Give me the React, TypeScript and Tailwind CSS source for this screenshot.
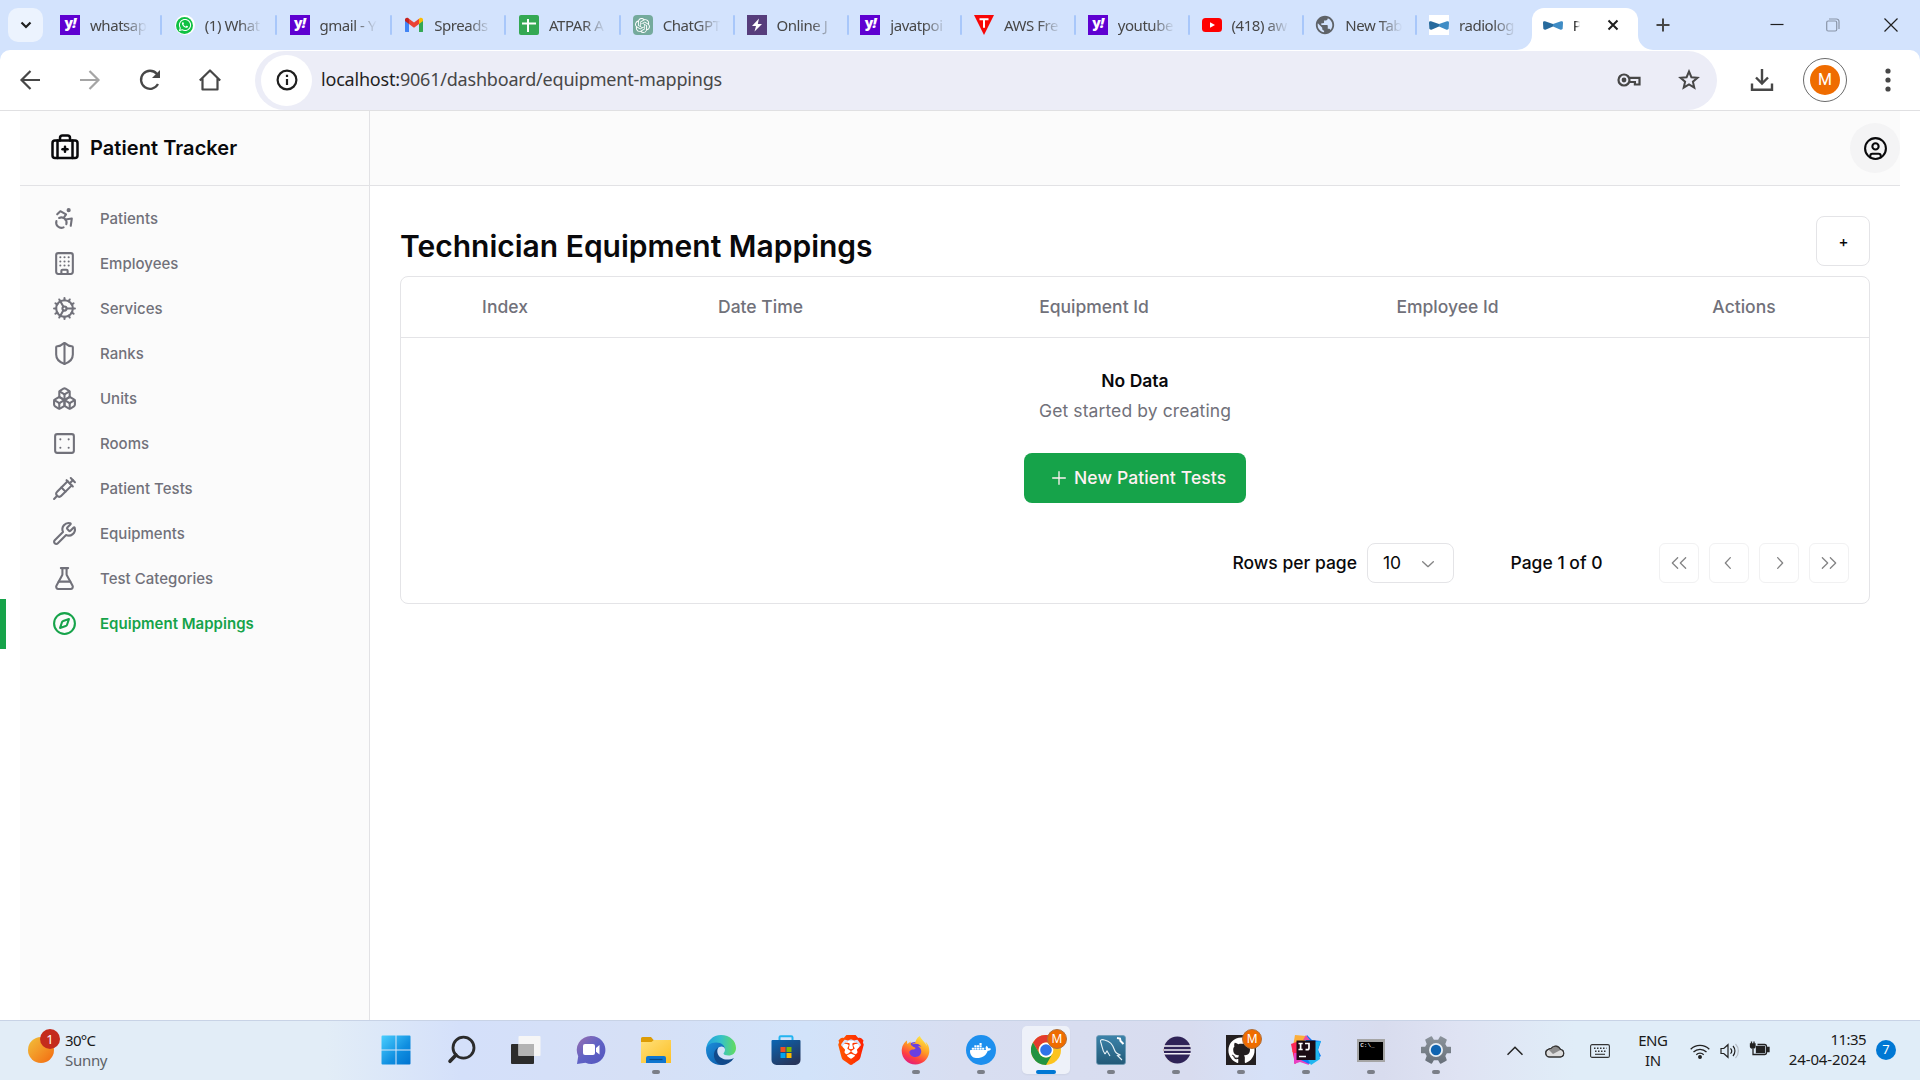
import React from "react";
import {
  Accessibility, Building, Cog, ShieldHalf, Boxes, Dice4, Syringe, Wrench, FlaskConical, Compass,
  BriefcaseMedical, CircleUser,
} from "lucide-react";
import { RxDoubleArrowLeft, RxDoubleArrowRight, RxChevronLeft, RxChevronRight, RxChevronDown, RxPlus } from "react-icons/rx";
import { SiOpenai, SiBrave, SiDocker } from "react-icons/si";
import { FaGithub, FaFirefoxBrowser, FaWhatsapp } from "react-icons/fa";
import { MdPublic } from "react-icons/md";

/* ---------- favicons ---------- */

const Yahoo = () => (
  <span className="flex size-5 items-center justify-center bg-[#5f01d1] font-['Open_Sans',sans-serif] text-[14px] leading-none font-extrabold tracking-[-1px] text-white">
    <span className="-mt-1">y<span className="italic">!</span></span>
  </span>
);

const WhatsApp = () => (
  <span className="flex size-5 items-center justify-center rounded-full bg-white">
    <span className="flex size-[17px] items-center justify-center rounded-full bg-[#10c143] text-white">
      <FaWhatsapp size={14} />
    </span>
  </span>
);

const Gmail = () => (
  <svg width="20" height="20" viewBox="0 0 20 20">
    <path d="M1 5v11.200c0 .5.4.9.9.9H5V8.500L1 5z" fill="#4285f4" />
    <path d="M19 5v11.200c0 .5-.4.9-.9.900H15V8.500L19 5z" fill="#34a853" />
    <path d="M15 4.400v4.600l4-3V4.600c0-1.700-1.900-2.500-3.200-1.500L15 3.700z" fill="#fbbc04" />
    <path d="M5 9V3.700l5 3.800 5-3.800V9l-5 3.800z" fill="#ea4335" />
    <path d="M1 4.600V6l4 3V3.700l-.8-.6C2.900 2.100 1 2.900 1 4.600z" fill="#c5221f" />
  </svg>
);

const Sheets = () => (
  <svg width="20" height="20" viewBox="0 0 20 20">
    <rect width="20" height="20" rx="2" fill="#34a853" />
    <path d="M9 4v13M3 8.500h14" stroke="#fff" strokeWidth="2" />
  </svg>
);

const ChatGpt = () => (
  <span className="flex size-5 items-center justify-center rounded-[4px] bg-[#74aa9c] text-white">
    <SiOpenai size={15} />
  </span>
);

const Bolt = () => (
  <svg width="20" height="20" viewBox="0 0 20 20">
    <rect width="20" height="20" fill="#563d7c" />
    <path d="M12 3.500 5 11h4l-1.500 5.500L15 9h-4.200z" fill="#fff" />
  </svg>
);

const Triangle = () => (
  <svg width="20" height="20" viewBox="0 0 20 20">
    <path d="M0 0h20L10 20z" fill="#f80606" />
    <path d="M5.500 4.200h9M10 4.200v8.500" stroke="#fff" strokeWidth="2" />
  </svg>
);

const YouTube = () => (
  <svg width="20" height="20" viewBox="0 0 20 20">
    <rect y="3" width="20" height="14" rx="3.500" fill="#f00" />
    <path d="M8 7.200v5.600l5-2.800z" fill="#fff" />
  </svg>
);

const Bow = ({ plate = false }: { plate?: boolean }) => (
  <svg width="20" height="20" viewBox="0 0 20 20" className="shrink-0">
    {plate && <rect width="20" height="20" fill="#fff" />}
    <path d="M0 7.500c0-1 1-1.500 2-1.200l8 2.700v2.500l-7 3c-1.500.5-2.500 0-2.700-1z" fill="#276a9d" />
    <path d="M20 7.500c0-1-1-1.500-2-1.200L10 9v2.500l7 3c1.500.5 2.500 0 2.700-1z" fill="#3f8cc5" />
  </svg>
);

const tabs = [
  { icon: <Yahoo />, title: "whatsap" },
  { icon: <WhatsApp />, title: "(1) What" },
  { icon: <Yahoo />, title: "gmail - Y" },
  { icon: <Gmail />, title: "Spreads" },
  { icon: <Sheets />, title: "ATPAR A" },
  { icon: <ChatGpt />, title: "ChatGPT" },
  { icon: <Bolt />, title: "Online J" },
  { icon: <Yahoo />, title: "javatpoi" },
  { icon: <Triangle />, title: "AWS Fre" },
  { icon: <Yahoo />, title: "youtube" },
  { icon: <YouTube />, title: "(418) aw" },
  { icon: <MdPublic size={22} className="-ml-px shrink-0 text-[#5f6368]" />, title: "New Tab" },
  { icon: <Bow plate />, title: "radiolog" },
];

function TabStrip() {
  return (
    <div className="flex h-[50px] w-full bg-[#d3e3fd] pl-2 text-[#474747]">
      <div className="mt-2 flex h-[34px] w-[35px] items-center justify-center rounded-[10px] bg-[#ecf3fe]">
        <svg width="12" height="8" viewBox="0 0 12 8" fill="none" stroke="#1f1f1f" strokeWidth="2.200"><path d="M1.500 1.500 6 6l4.500-4.500" /></svg>
      </div>
      <div className="ml-[3px] flex">
        {tabs.map((t, i) => (
          <div key={i} className={i < 4 ? "flex h-[50px] w-[114.750px] items-center pl-[14px]" : "flex h-[50px] w-[113.750px] items-center pl-[14px]"}>
            <span className="flex w-5 shrink-0 justify-center">{t.icon}</span>
            <span className="ml-[10px] w-[57px] shrink-0 text-[15px] tracking-[-0.450px] whitespace-nowrap [mask-image:linear-gradient(to_right,black_60%,rgba(0,0,0,0.05)_98%)]">{t.title}</span>
            <span className={i === 12 ? "hidden" : "ml-[13px] h-5 w-[2px] shrink-0 rounded-full bg-[#a8c7fa]"} />
          </div>
        ))}
      </div>
      <div className="mt-2 -ml-[12px] flex h-[42px] items-end">
        <svg width="15" height="15" viewBox="0 0 15 15"><path d="M0 15A15 15 0 0 0 15 0V15z" fill="#fff" /></svg>
        <div className="flex h-[42px] w-[106px] items-center rounded-t-[12px] bg-white pb-2 pl-[11px]">
          <Bow />
          <span className="ml-[10px] w-[9px] text-[15px] text-[#1f1f1f] [mask-image:linear-gradient(to_right,black_20%,transparent_80%)]">P</span>
          <svg className="ml-[25px]" width="12" height="12" viewBox="0 0 12 12" stroke="#1f1f1f" strokeWidth="2"><path d="m1.500 1.500 9 9m0-9-9 9" /></svg>
        </div>
        <svg width="15" height="15" viewBox="0 0 15 15"><path d="M15 15A15 15 0 0 1 0 0V15z" fill="#fff" /></svg>
      </div>
      <div className="ml-[3px] flex h-[50px] items-center">
        <svg width="14" height="14" viewBox="0 0 14 14" stroke="#474747" strokeWidth="2"><path d="M7 .5v13M.5 7h13" /></svg>
      </div>
      <div className="mr-[22px] ml-auto flex h-[50px] items-center">
        <svg width="14" height="14" viewBox="0 0 14 14" stroke="#1f1f1f" strokeWidth="1.200"><path d="M.5 6.500h13" /></svg>
        <svg className="ml-[42px]" width="14" height="14" viewBox="0 0 14 14" fill="none" stroke="#8a95a8" strokeWidth="1.200"><rect x=".7" y="3" width="10" height="10" rx="1.500" /><path d="M3 1h7.500A2.500 2.500 0 0 1 13 3.500V11" /></svg>
        <svg className="ml-[44px]" width="14" height="14" viewBox="0 0 14 14" stroke="#1f1f1f" strokeWidth="1.200"><path d="m.5.5 13 13m0-13-13 13" /></svg>
      </div>
    </div>
  );
}

function Toolbar() {
  return (
    <div className="h-[60px] w-full bg-[#d3e3fd]">
      <div className="flex h-[60px] w-full items-center rounded-t-[10px] bg-white pl-[18px] text-[#474747]">
        <svg width="24" height="24" viewBox="0 0 24 24" fill="none" stroke="#474747" strokeWidth="2.200"><path d="M22 12H3.500M12.500 3 3.500 12l9 9" /></svg>
        <svg className="ml-9" width="24" height="24" viewBox="0 0 24 24" fill="none" stroke="#a5a5a5" strokeWidth="2.200"><path d="M2 12h18.500M11.500 3l9 9-9 9" /></svg>
        <svg className="ml-9" width="24" height="24" viewBox="0 0 24 24" fill="none" stroke="#474747" strokeWidth="2.300"><path d="M20 16a9 9 0 1 1-1.300-10.300L21 8" /><path d="M22 2v8h-8z" fill="#474747" stroke="none" /></svg>
        <svg className="ml-9" width="24" height="24" viewBox="0 0 24 24" fill="none" stroke="#474747" strokeWidth="2.200"><path d="M4.500 10.500V21.500h15V10.500M1.800 12.500 12 2.500l10.200 10" strokeLinejoin="round" /></svg>
        <div className="ml-[33px] flex h-[59px] w-[1462px] items-center rounded-full bg-[#ecedf7] pr-[17px] pl-[6px]">
          <span className="flex size-[51px] items-center justify-center rounded-full bg-white">
            <svg width="22" height="22" viewBox="0 0 22 22" fill="none" stroke="#1f1f1f" strokeWidth="2.200"><circle cx="11" cy="11" r="9.400" /><path d="M11 10v6M11 5.800v2.200" /></svg>
          </span>
          <span className="mb-[2px] ml-[9px] text-[18px] tracking-[-0.200px] whitespace-nowrap text-[#474747]"><span className="text-[#1f1f1f]">localhost:</span>9061/dashboard/equipment-mappings</span>
          <svg className="ml-auto" width="24" height="16" viewBox="0 0 24 16" fill="none" stroke="#474747" strokeWidth="2.200"><circle cx="7" cy="8" r="5.500" /><circle cx="7" cy="8" r="1.300" fill="#474747" /><path d="M12 5.800h10.500v6.700h-4.600V10H12" /></svg>
          <svg className="ml-[37px]" width="22" height="22" viewBox="0 0 22 22" fill="none" stroke="#474747" strokeWidth="2"><path d="m11 2.500 2.400 5.700 6.100.5-4.600 4 1.400 6L11 15.500l-5.300 3.200 1.400-6-4.600-4 6.100-.5z" /></svg>
        </div>
        <svg className="ml-[33px]" width="24" height="24" viewBox="0 0 24 24" fill="none" stroke="#474747" strokeWidth="2.400"><path d="M12 1v14M6 9.500l6 6 6-6M2 15.500V21.700h20V15.500" /></svg>
        <span className="ml-[29px] flex size-[44px] items-center justify-center rounded-full border border-[#6b6b6b]">
          <span className="flex size-[30px] items-center justify-center rounded-full bg-[#ef6c00] font-[Roboto,sans-serif] text-[16px] text-white">M</span>
        </span>
        <svg className="ml-[37.500px]" width="6" height="24" viewBox="0 0 6 24" fill="#474747"><circle cx="3" cy="3" r="2.600" /><circle cx="3" cy="12" r="2.600" /><circle cx="3" cy="21" r="2.600" /></svg>
      </div>
    </div>
  );
}

/* ---------- application ---------- */

const nav = [
  [Accessibility, "Patients"],
  [Building, "Employees"],
  [Cog, "Services"],
  [ShieldHalf, "Ranks"],
  [Boxes, "Units"],
  [Dice4, "Rooms"],
  [Syringe, "Patient Tests"],
  [Wrench, "Equipments"],
  [FlaskConical, "Test Categories"],
  [Compass, "Equipment Mappings"],
] as const;

function Sidebar() {
  return (
    <aside className="flex w-[370px] shrink-0">
      <div className="w-5 shrink-0 pt-[488px]">
        <div className="h-[50px] w-[6px] bg-[#16a34a]" />
      </div>
      <div className="flex grow flex-col border-r border-[#e2e2e5] bg-[#fbfbfb]">
        <div className="flex h-[75px] items-center border-b border-[#e2e2e5] pl-[30px] text-[#09090b]">
          <BriefcaseMedical size={30} />
          <span className="ml-[10px] text-[20px] font-semibold tracking-[0.060px]">Patient Tracker</span>
        </div>
        <nav className="flex flex-col pt-[10px]">
          {nav.map(([Icon, label]) => (
            <div key={label} className={label === "Equipment Mappings" ? "flex h-[45px] items-center pl-[32px] font-semibold text-[#16a34a]" : "flex h-[45px] items-center pl-[32px] font-medium text-[#71717a]"}>
              <Icon size={25} />
              <span className="ml-[23px] pt-[2px] text-[15px] tracking-[0.020px] whitespace-nowrap">{label}</span>
            </div>
          ))}
        </nav>
      </div>
    </aside>
  );
}

const pageButton = "flex size-10 items-center justify-center rounded-[6px] border border-[#f1f1f2] text-[#848485]";

function Mappings() {
  return (
    <main className="flex flex-col pt-[30px] pr-[50px] pl-[30px] text-[#09090b]">
      <div className="flex h-[60px] items-start justify-between">
        <h1 className="mt-[8px] text-[30px] leading-[45px] font-semibold">Technician Equipment Mappings</h1>
        <button className="flex h-[50px] w-[54px] items-center justify-center rounded-[8px] border border-[#e4e4e7] pt-[2px] pl-px text-[15px] font-medium">+</button>
      </div>
      <section className="h-[328px] rounded-[8px] border border-[#e4e4e7] text-[17.500px]">
        <div className="grid h-[61px] grid-cols-[208px_303px_364px_343px_250px] items-center border-b border-[#e4e4e7] text-center font-medium text-[#71717a]">
          <span>Index</span>
          <span>Date Time</span>
          <span>Equipment Id</span>
          <span>Employee Id</span>
          <span>Actions</span>
        </div>
        <div className="flex flex-col items-center pt-[28px]">
          <p className="leading-[30px] font-semibold">No Data</p>
          <p className="leading-[30px] tracking-[0.100px] text-[#71717a]">Get started by creating</p>
          <button className="mt-[27px] flex h-[50px] w-[222px] items-center rounded-[8px] bg-[#16a34a] pl-[25px] font-medium text-[#fff1f2]">
            <RxPlus size={20} />
            <span className="ml-[5px] tracking-[0.120px] whitespace-nowrap">New Patient Tests</span>
          </button>
        </div>
        <div className="mt-[40px] flex items-center justify-end pr-5 font-medium">
          <span>Rows per page</span>
          <div className="ml-[10px] flex h-10 w-[87px] items-center justify-between rounded-[8px] border border-[#e4e4e7] pr-[15px] pl-[15px] font-normal">
            <span>10</span>
            <RxChevronDown size={20} className="text-[#848485]" />
          </div>
          <span className="ml-[40px] w-[125px] text-center">Page 1 of 0</span>
          <div className="ml-[40px] flex gap-[10px]">
            <span className={pageButton}><RxDoubleArrowLeft size={20} /></span>
            <span className={pageButton}><RxChevronLeft size={20} /></span>
            <span className={pageButton}><RxChevronRight size={20} /></span>
            <span className={pageButton}><RxDoubleArrowRight size={20} /></span>
          </div>
        </div>
      </section>
    </main>
  );
}

/* ---------- taskbar ---------- */

const MBadge = () => (
  <span className="absolute -top-[6px] -right-[6px] flex size-5 items-center justify-center rounded-full border border-[#b0703a] bg-[#ef6c00] text-[12px] leading-none text-white">M</span>
);

const WindowsLogo = () => (
  <svg width="30" height="30" viewBox="0 0 30 30">
    <defs><linearGradient id="win" gradientUnits="userSpaceOnUse" x1="0" y1="0" x2="30" y2="30"><stop stopColor="#4cd0ff" /><stop offset=".6" stopColor="#0f8ee0" /><stop offset="1" stopColor="#0072cf" /></linearGradient></defs>
    <path d="M1.500.5h13v14H.500v-13a1 1 0 0 1 1-1zM15.500.5h13a1 1 0 0 1 1 1v13h-14zM.5 15.500h14v14h-13a1 1 0 0 1-1-1zM15.500 15.500h14v13a1 1 0 0 1-1 1h-13z" fill="url(#win)" />
  </svg>
);

const SearchGlyph = () => (
  <svg width="30" height="30" viewBox="0 0 30 30" fill="none" stroke="#2b2b2b"><circle cx="17.500" cy="12.700" r="10.500" strokeWidth="2.800" /><path d="m10 20-6 6.300" strokeWidth="3.600" strokeLinecap="round" /></svg>
);

const TaskView = () => (
  <svg width="30" height="30" viewBox="0 0 30 30">
    <rect y="9" width="23" height="20" rx="1" fill="#2c2c2c" />
    <rect x="7.500" y="1" width="22" height="20" rx="1" fill="#f6f6f6" />
    <rect x="7.500" y="9" width="15.500" height="12" fill="#b3b3b3" />
  </svg>
);

const Chat = () => (
  <svg width="30" height="30" viewBox="0 0 30 30">
    <defs><linearGradient id="chat" x1="0" y1="0" x2="1" y2="1"><stop stopColor="#9b6fae" /><stop offset=".5" stopColor="#5f62c5" /><stop offset="1" stopColor="#5355bd" /></linearGradient></defs>
    <path d="M15 1a14 14 0 1 1-5.500 26.700L1 29l1.200-7.800A14 14 0 0 1 15 1z" fill="url(#chat)" />
    <rect x="7" y="9" width="12" height="11" rx="2" fill="#fff" /><path d="m20 13 3.500-3v9.500L20 16.700z" fill="#fff" />
  </svg>
);

const Folder = () => (
  <svg width="30" height="30" viewBox="0 0 30 30">
    <defs><linearGradient id="fol" x1="0" y1="0" x2="1" y2="1"><stop stopColor="#ffe07a" /><stop offset="1" stopColor="#fdbf24" /></linearGradient></defs>
    <path d="M0 3.500A1.500 1.500 0 0 1 1.500 2H10l3 3.500L10 9H0z" fill="#dd9c05" />
    <path d="M0 7h10.500l2.500-2h17v23H0z" fill="url(#fol)" />
    <path d="M5 28v-5a2 2 0 0 1 2-2h16a2 2 0 0 1 2 2v5z" fill="#0f76d0" /><path d="M8.500 24.500h13" stroke="#0a4a86" strokeWidth="1.200" />
  </svg>
);

const Edge = () => (
  <svg width="30" height="30" viewBox="0 0 30 30">
    <defs>
      <linearGradient id="edA" x1="0" y1=".5" x2="1" y2=".5"><stop stopColor="#1f9fe0" /><stop offset=".5" stopColor="#35c1c9" /><stop offset="1" stopColor="#64dc5c" /></linearGradient>
      <linearGradient id="edB" x1="0" y1="0" x2="1" y2="1"><stop stopColor="#1b8fdc" /><stop offset="1" stopColor="#0c53a0" /></linearGradient>
    </defs>
    <path d="M0 15C.5 6 7 0 15 0c9 0 15 6 15 13 0 5-3.500 7.500-7.500 7.500-3 0-5-1-5-2 0-.8 1.500-1.500 1.500-4 0-3-3-5.500-7.500-5.500C6 9 1 11 0 15z" fill="url(#edA)" />
    <path d="M0 15c0-4 4.500-7.500 10-7.500 6 0 9 3.500 9 7 0-2-2-3-3.500-3-3 0-5 3-5 6 0 6 6 12 12 9.500C20 29 17.500 30 15 30 7 30 0 24 0 15z" fill="url(#edB)" />
    <path d="M12 12.500c-3 2-4.500 5-4 9 .7 4.500 4 7.700 8 8.500 5-.2 9-2.500 12-7-7 3.500-15 1-16.500-5-.5-2 0-4 .5-5.500z" fill="#114a8b" />
  </svg>
);

const Store = () => (
  <svg width="30" height="30" viewBox="0 0 30 30">
    <defs><linearGradient id="sto" x1="0" y1="0" x2=".6" y2="1"><stop stopColor="#0a66b4" /><stop offset="1" stopColor="#26365c" /></linearGradient></defs>
    <path d="M8.500 6V2.500a1.200 1.200 0 0 1 1.200-1.200h10.600a1.200 1.200 0 0 1 1.200 1.200V6" fill="none" stroke="#23b4f0" strokeWidth="2" />
    <path d="M.5 6a1 1 0 0 1 1-1h27a1 1 0 0 1 1 1v19a5 5 0 0 1-5 5h-19a5 5 0 0 1-5-5z" fill="url(#sto)" />
    <path d="M9.500 12h5v5h-5z" fill="#f25022" /><path d="M15.500 12h5v5h-5z" fill="#7fba00" /><path d="M9.500 18h5v5h-5z" fill="#00a4ef" /><path d="M15.500 18h5v5h-5z" fill="#ffb900" />
  </svg>
);

const Brave = () => (
  <span className="flex size-[30px] items-center justify-center bg-[radial-gradient(circle,white_0_9px,transparent_9px)]">
    <svg width="0" height="0"><defs><linearGradient id="brv"><stop stopColor="#ff5a00" /><stop offset="1" stopColor="#ff1f00" /></linearGradient></defs></svg>
    <SiBrave size={30} fill="url(#brv)" className="shrink-0" />
  </span>
);

const Firefox = () => (
  <span className="flex size-[30px] items-center justify-center bg-[radial-gradient(circle_at_46%_52%,#6a3fe0_0_8px,transparent_9px)]">
    <svg width="0" height="0"><defs><linearGradient id="ffx" x1=".8" y1="0" x2=".3" y2="1"><stop stopColor="#fff04a" /><stop offset=".45" stopColor="#ff9a22" /><stop offset=".75" stopColor="#ff4040" /><stop offset="1" stopColor="#e01c80" /></linearGradient></defs></svg>
    <FaFirefoxBrowser size={29} fill="url(#ffx)" className="shrink-0" />
  </span>
);

const Docker = () => (
  <span className="flex size-[30px] items-center justify-center rounded-full bg-[#1d8fee] text-white"><SiDocker size={21} /></span>
);

const Chrome = () => (
  <span className="relative size-[30px]">
    <svg width="30" height="30" viewBox="0 0 30 30">
      <circle cx="15" cy="15" r="15" fill="#fcc31e" />
      <path d="M2 7.500A15 15 0 0 1 28 7.500H15A7.500 7.500 0 0 0 8.500 18.700z" fill="#e33b2e" />
      <path d="M2 7.500 8.500 18.700A7.500 7.500 0 0 0 21.500 18.700L15 30A15 15 0 0 1 2 7.500z" fill="#229342" />
      <circle cx="15" cy="15" r="7.400" fill="#fff" /><circle cx="15" cy="15" r="5.800" fill="#2f73e8" />
    </svg>
    <MBadge />
  </span>
);

const MySql = () => (
  <svg width="30" height="30" viewBox="0 0 30 30">
    <defs><linearGradient id="sql" x1="0" y1="0" x2="0" y2="1"><stop stopColor="#3c83aa" /><stop offset="1" stopColor="#235a78" /></linearGradient></defs>
    <rect x=".5" y=".5" width="29" height="29" rx="2.500" fill="url(#sql)" stroke="#6d9bb5" strokeWidth=".8" />
    <path d="M9 19C6 15 6 10 4.500 6.500 4 5 6 4 8.500 5c5 1 8.500 5 10 10 .7 2.500 2.500 4 6 5l-3 .5 4.500 4.500M9 19l2-3 3 5" fill="none" stroke="#e8f2f7" strokeWidth="1.100" />
    <path d="m21 3 3 .5.500 2.500 3 3" fill="none" stroke="#fff" strokeWidth="2" />
  </svg>
);

const Eclipse = () => (
  <svg width="30" height="30" viewBox="0 0 30 30">
    <path d="M13 1.500a14 14 0 0 0 0 27C5 25.500 3 20 3 15S5 4.500 13 1.500z" fill="#f59a36" />
    <circle cx="16.300" cy="15" r="13.500" fill="#2f2357" />
    <path d="M3 11h27M3 15h27M3 18.700h27" stroke="#f1eff6" strokeWidth="1.600" />
  </svg>
);

const GitHub = () => (
  <span className="relative flex size-[30px] items-center justify-center bg-[#231f20] text-white"><FaGithub size={27} /><MBadge /></span>
);

const IntelliJ = () => (
  <svg width="30" height="30" viewBox="0 0 30 30">
    <path d="m4 0 11 1-4 14-10 2z" fill="#fcae3a" /><path d="m0 9 8-3 7 14L4 29z" fill="#fe2857" /><path d="M3 18h12l3 12-9-3-6 2z" fill="#e83fc3" />
    <path d="m16 0 5 5 9 1-3 9 3 6-12 8-8-4z" fill="#087cfa" /><path d="m23 7 7-1-3 8 2 10-9 6-3-5 6-4z" fill="#20b6f0" /><path d="M12 5 15 0l4 5z" fill="#e84fa4" />
    <rect x="5.500" y="5.500" width="19" height="19.500" fill="#1b0b14" />
    <path d="M7.500 8.500h4.200M9.600 8.500v6M7.500 14.500h4.200M14 8.500h4v4.500q0 1.700-1.800 1.700h-1.700M8 21.500h7" fill="none" stroke="#fff" strokeWidth="1.700" />
  </svg>
);

const Terminal = () => (
  <span className="flex h-[23px] w-[28px] flex-col border-2 border-t-[3px] border-[#a5a5a5] bg-black pl-px font-['Liberation_Mono',monospace] text-[6px] leading-[8px] font-bold whitespace-nowrap text-[#ddd]">C:\_</span>
);

const Gear = () => (
  <svg width="30" height="30" viewBox="0 0 30 30">
    <defs><linearGradient id="gr" x1="0" y1="0" x2="0" y2="1"><stop stopColor="#8a929a" /><stop offset="1" stopColor="#68707a" /></linearGradient></defs>
    <path d="m10.500 2 2 3.500h5l2-3.500 5.500 3-1.500 4 2 3.500h4v5h-4l-2 3.500 1.500 4-5.500 3-2-3.500h-5l-2 3.500L5 25l1.500-4-2-3.500h-4v-5h4l2-3.500L5 5z" fill="url(#gr)" stroke="url(#gr)" strokeWidth="1.500" strokeLinejoin="round" />
    <circle cx="15" cy="15" r="7" fill="#e7eef5" /><circle cx="15" cy="15" r="5.200" fill="#0f63b0" />
  </svg>
);

const apps: [React.ReactNode, "none" | "open" | "active"][] = [
  [<WindowsLogo />, "none"], [<SearchGlyph />, "none"], [<TaskView />, "none"], [<Chat />, "none"],
  [<Folder />, "open"], [<Edge />, "none"], [<Store />, "none"], [<Brave />, "none"],
  [<Firefox />, "open"], [<Docker />, "open"], [<Chrome />, "active"], [<MySql />, "open"],
  [<Eclipse />, "open"], [<GitHub />, "open"], [<IntelliJ />, "open"], [<Terminal />, "open"], [<Gear />, "open"],
];

const indicator = {
  none: "h-1 w-2",
  open: "h-1 w-2 rounded-full bg-[#7b7f88]",
  active: "h-1 w-5 rounded-full bg-[#0078d4]",
};

function Taskbar() {
  return (
    <footer className="flex h-[60px] w-full shrink-0 border-t border-[#c8d3e6] bg-[linear-gradient(90deg,#e2edf7_0%,#e2edf7_17%,#d4e0fa_24%,#d6e0f6_33%,#d2e3fa_42%,#d8def1_50%,#d8dcef_62%,#d6e1f8_66%,#d8dcee_72%,#dfe3f3_76%,#e0edf8_82%,#e0edf8_100%)] text-[15px] text-[#1a1a1a]">
      <div className="flex w-[363px] shrink-0 pl-7">
        <span className="relative mt-[16px] size-[26px] rounded-full bg-linear-to-br from-[#efc03a] to-[#f2660c]">
          <span className="absolute -top-[8px] left-[12px] flex size-5 items-center justify-center rounded-full bg-[#c42b1c] text-[13px] leading-none text-white">1</span>
        </span>
        <div className="mt-[9px] ml-[11px] leading-[20px] tracking-[-0.300px]">
          <div className="tracking-[-0.700px]">30°C</div>
          <div className="text-[#5d6268]">Sunny</div>
        </div>
      </div>
      <div className="flex">
        {apps.map(([icon, state], i) => (
          <div key={i} className="flex w-[65.060px] justify-center pt-[5px]">
            <div className={state === "active" ? "flex h-[48px] w-[48px] flex-col items-center rounded-[5px] bg-[#eef1f9] shadow-xs" : "flex h-[48px] w-[48px] flex-col items-center"}>
              <span className="mt-[9px] flex h-[30px] items-center justify-center">{icon}</span>
              <span className="mt-[5px] flex"><span className={indicator[state]} /></span>
            </div>
          </div>
        ))}
      </div>
      <div className="flex grow items-center">
        <svg className="ml-[38px]" width="16" height="10" viewBox="0 0 16 10" fill="none" stroke="#222" strokeWidth="1.500"><path d="m.5 8.700 7.500-7.500 7.500 7.500" /></svg>
        <svg className="ml-[22px]" width="20" height="14" viewBox="0 0 20 14"><path d="M4.500 13A4 4 0 0 1 3.500 5.200 4 4 0 0 1 6 4.500a5.500 5.500 0 0 1 9.500 1 3.800 3.800 0 0 1 0 7.500z" fill="#ddd" stroke="#333" strokeWidth="1.100" /><path d="M3.500 5.500C5.500 3.800 7 4.500 7.500 3.200 9.500-.3 15 1 15.500 6L8 10z" fill="#8c8c8c" /><path d="M4.500 13A4 4 0 0 1 3.500 5.200 4 4 0 0 1 6 4.500a5.500 5.500 0 0 1 9.500 1 3.800 3.800 0 0 1 0 7.500z" fill="none" stroke="#333" strokeWidth="1.100" /></svg>
        <svg className="ml-[25px]" width="20" height="14" viewBox="0 0 20 14" fill="none" stroke="#333" strokeWidth="1.100"><rect x=".6" y=".6" width="18.800" height="12.800" rx="1.500" /><path d="M4 4.300h12.500M5 7.300h11" strokeDasharray="1.500 1.500" strokeWidth="1.500" /><path d="M5 10.300h10" /></svg>
        <div className="mb-[2px] ml-[28px] w-[30px] text-center leading-[20px] tracking-[-0.500px]"><div>ENG</div><div>IN</div></div>
        <svg className="ml-[22px]" width="20" height="16" viewBox="0 0 20 16" fill="none" stroke="#222" strokeWidth="1.300"><path d="M.7 6.200a13 13 0 0 1 18.600 0M3.500 9a9.200 9.200 0 0 1 13 0M6.300 11.700a5.200 5.200 0 0 1 7.400 0" /><circle cx="10" cy="14" r="1.300" fill="#222" /></svg>
        <svg className="ml-[10px]" width="20" height="16" viewBox="0 0 20 16" fill="none" stroke="#222" strokeWidth="1.200"><path d="M1 5.500h2.800L8 1.700v12.600L3.800 10.500H1zM10.500 5.300a4 4 0 0 1 0 5.400M13 3a7.500 7.500 0 0 1 0 10" /><path d="M15.500 1a10 10 0 0 1 0 14" stroke="#b5bcc4" /></svg>
        <svg className="mb-[3px] ml-[9px]" width="21" height="16" viewBox="0 0 21 16" fill="none" stroke="#222" strokeWidth="1.300"><path d="M8.500 3.500h7a2 2 0 0 1 2 2v6a2 2 0 0 1-2 2H6M4 8v5.500h2" /><rect x="7.500" y="5.500" width="8" height="6" fill="#222" /><path d="M18.500 6.500h1.500v4h-1.500zM1.500 3H6v2.500a1.500 1.500 0 0 1-1.500 1.500H3a1.500 1.500 0 0 1-1.500-1.500zM2.500.5V3M5 .5V3" fill="#222" /></svg>
        <div className="mb-[3px] ml-auto text-right leading-[20px] tracking-[-0.550px] whitespace-nowrap"><div>11:35</div><div className="tracking-[-0.100px]">24-04-2024</div></div>
        <span className="mr-[24px] mb-[2px] ml-[10px] flex size-5 shrink-0 items-center justify-center rounded-full bg-[#0078d4] text-[13px] text-white">7</span>
      </div>
    </footer>
  );
}

export default function App() {
  return (
    <div className="flex h-[1080px] w-[1920px] flex-col overflow-hidden bg-white font-['Noto_Sans',sans-serif]">
      <TabStrip />
      <Toolbar />
      <div className="flex h-[910px] w-full border-t border-[#e0e0e2] font-[Inter,sans-serif]">
        <Sidebar />
        <div className="flex grow flex-col">
          <header className="mr-5 flex h-[75px] items-center justify-end border-b border-[#e2e2e5] bg-[#fbfbfb]">
            <span className="flex size-[50px] items-center justify-center rounded-full bg-[#f4f4f5] text-[#09090b]"><CircleUser size={25} /></span>
          </header>
          <Mappings />
        </div>
      </div>
      <Taskbar />
    </div>
  );
}
